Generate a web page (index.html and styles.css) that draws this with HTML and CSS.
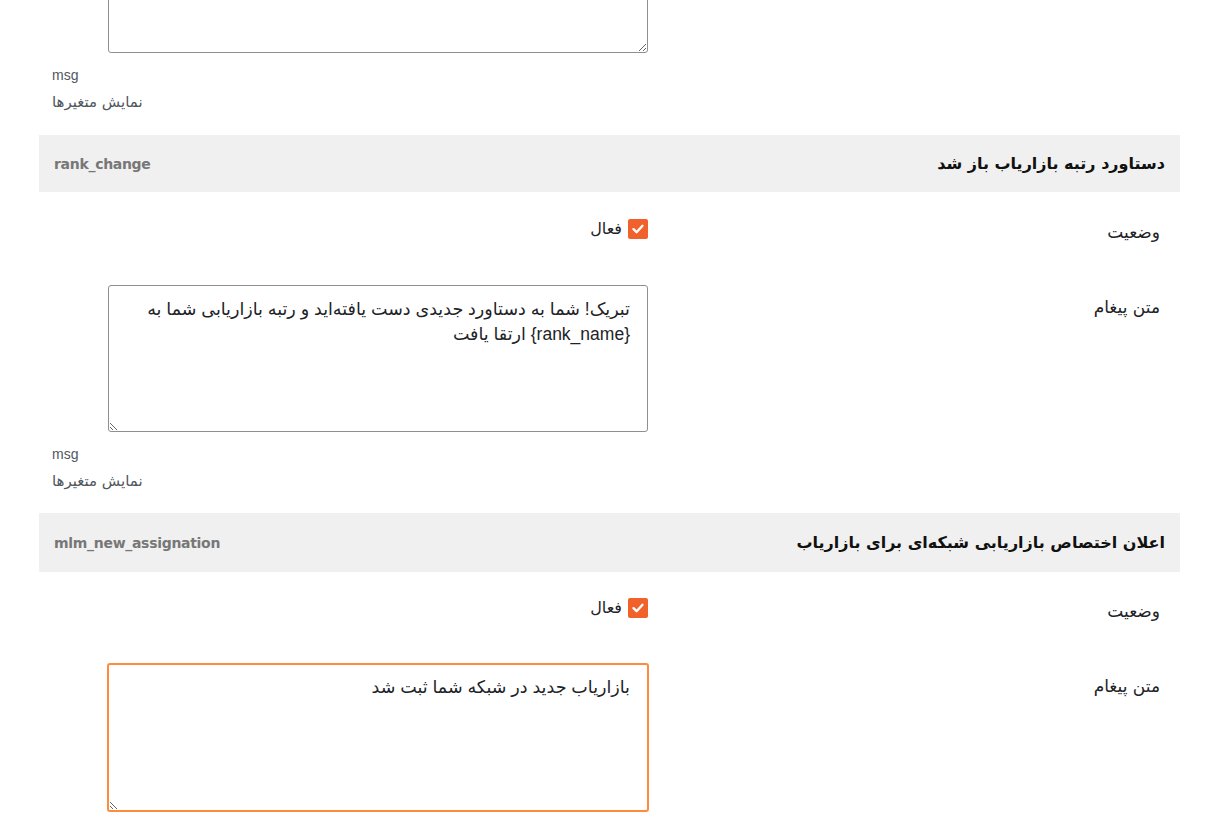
FILE: index.html
```html
<!DOCTYPE html>
<html lang="fa" dir="rtl">
<head>
<meta charset="utf-8">
<title>تنظیمات پیامک</title>
<link rel="stylesheet" href="styles.css">
</head>
<body>
<div class="page">
  <div class="block first">
    <div class="row">
      <div class="label"></div>
      <div class="field"><textarea class="msgbox" dir="ltr"></textarea></div>
    </div>
    <div class="vars">
      <div class="vars-code">msg</div>
      <div class="vars-link">نمایش متغیرها</div>
    </div>
  </div>

  <div class="block">
    <div class="sec-head">
      <h3 class="sec-title">دستاورد رتبه بازاریاب باز شد</h3>
      <span class="sec-code">rank_change</span>
    </div>
    <div class="row status">
      <div class="label">وضعیت</div>
      <div class="field"><label class="check"><span class="box"><svg viewBox="0 0 20 20" width="20" height="20"><path d="M5.5 10.2 L8.6 13.2 L14.5 6.8" fill="none" stroke="#fff" stroke-width="2.4" stroke-linecap="round" stroke-linejoin="round"/></svg></span><span>فعال</span></label></div>
    </div>
    <div class="row">
      <div class="label">متن پیغام</div>
      <div class="field"><textarea class="msgbox">تبریک! شما به دستاورد جدیدی دست یافته‌اید و رتبه بازاریابی شما به {rank_name} ارتقا یافت</textarea></div>
    </div>
    <div class="vars">
      <div class="vars-code">msg</div>
      <div class="vars-link">نمایش متغیرها</div>
    </div>
  </div>

  <div class="block">
    <div class="sec-head second">
      <h3 class="sec-title">اعلان اختصاص بازاریابی شبکه‌ای برای بازاریاب</h3>
      <span class="sec-code">mlm_new_assignation</span>
    </div>
    <div class="row status">
      <div class="label">وضعیت</div>
      <div class="field"><label class="check"><span class="box"><svg viewBox="0 0 20 20" width="20" height="20"><path d="M5.5 10.2 L8.6 13.2 L14.5 6.8" fill="none" stroke="#fff" stroke-width="2.4" stroke-linecap="round" stroke-linejoin="round"/></svg></span><span>فعال</span></label></div>
    </div>
    <div class="row">
      <div class="label">متن پیغام</div>
      <div class="field"><textarea class="msgbox focused">بازاریاب جدید در شبکه شما ثبت شد</textarea></div>
    </div>
  </div>
</div>
</body>
</html>
```

FILE: styles.css
```css
html, body {
  margin: 0;
  padding: 0;
  background: #ffffff;
}
body {
  font-family: "DejaVu Sans", "Noto Sans", sans-serif;
  color: #1d2327;
  overflow: hidden;
  height: 818px;
}
.page {
  margin: -94px 40px 0 39px;
}
.block {
  display: flex;
  flex-direction: column;
}
.sec-head {
  display: flex;
  justify-content: space-between;
  align-items: center;
  height: 57px;
  padding: 0 15px;
  background: #f0f0f0;
  margin-top: 25px;
}
.sec-head.second {
  height: 59px;
  margin-top: 24px;
}
.sec-title {
  margin: 0;
  font-size: 16px;
  font-weight: bold;
  color: #111;
}
.sec-head.second .sec-title {
  letter-spacing: 0.3px;
}
.sec-code {
  font-size: 14px;
  font-weight: bold;
  color: #777;
  direction: ltr;
  font-family: "DejaVu Sans", sans-serif;
  letter-spacing: -0.3px;
}
.row {
  display: flex;
  align-items: flex-start;
}
.row.status {
  margin-top: 27px;
  height: 20px;
  margin-bottom: 46px;
}
.second + .row.status {
  margin-top: 26px;
}
.label {
  width: 512px;
  padding-right: 20px;
  font-size: 17px;
  color: #1d2327;
  line-height: 20px;
  flex: none;
}
.row.status .label {
  padding-top: 3px;
}
.row:not(.status) .label {
  padding-top: 12px;
}
.field {
  flex: none;
  width: 540px;
}
.check {
  display: inline-flex;
  align-items: center;
  gap: 6px;
  font-size: 16px;
  color: #1d2327;
  line-height: 20px;
}
.box {
  width: 20px;
  height: 20px;
  background: #f0612c;
  border-radius: 2px;
  display: block;
}
.box svg { display: block; }
.msgbox {
  display: block;
  box-sizing: border-box;
  width: 540px;
  height: 147px;
  margin: 0;
  padding: 11px 17px;
  border: 1px solid #8c8f94;
  border-radius: 3px;
  font-family: "Liberation Sans", "DejaVu Sans", sans-serif;
  font-size: 17.5px;
  line-height: 25px;
  color: #1d2327;
  background: #fff;
  resize: vertical;
  outline: none;
}
.msgbox.focused {
  border: 2px solid #ff8c3c;
  height: 149px;
  width: 542px;
  margin-right: -1px;
  padding: 10px 17px;
  margin-top: -1px;
}
.vars {
  direction: ltr;
  text-align: left;
  padding-left: 13px;
  color: #50575e;
  margin-top: 14px;
}
.vars-code {
  font-family: "Liberation Sans", Arial, sans-serif;
  font-size: 14px;
  line-height: 16px;
}
.vars-link {
  direction: rtl;
  display: block;
  font-size: 15px;
  margin-top: 11px;
  line-height: 16px;
}
```
